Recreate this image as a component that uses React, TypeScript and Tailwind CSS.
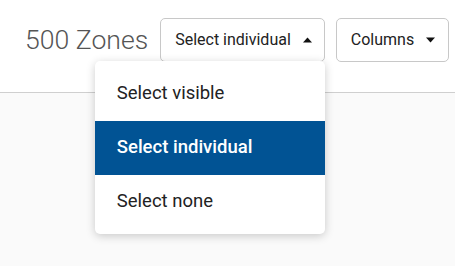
import React from "react";

const Caret = ({ up }: { up?: boolean }) => (
  <svg width="9" height="6" viewBox="0 0 9 6" className="ml-[12px] shrink-0">
    {up ? <path d="M0 5.5 L4.5 0.5 L9 5.5 Z" fill="#111" /> : <path d="M0 0.5 L4.5 5.5 L9 0.5 Z" fill="#111" />}
  </svg>
);

export default function App() {
  const items = ["Select visible", "Select individual", "Select none"];
  const selected = 1;

  return (
    <div className="w-[455px] h-[266px] flex flex-col bg-[#fafafa] font-['Roboto',sans-serif] overflow-hidden">
      {/* Header */}
      <div className="h-[93px] shrink-0 bg-white border-b border-[#cfcfcf] flex items-start pl-[25px] pt-[18px] whitespace-nowrap">
        <span className="shrink-0 text-[26.6px] font-light text-[#555] leading-[44px] mr-[12px]">500 Zones</span>

        <div className="relative shrink-0">
          <button className="h-[44px] pl-[14px] pr-[12px] flex items-center border border-[#c8c8c8] rounded-[5px] bg-white text-[16px] text-[#222]">
            Select individual
            <Caret up />
          </button>

          {/* Dropdown menu */}
          <div className="absolute right-0 top-[43px] w-[230px] bg-white rounded-[5px] shadow-[0_2px_10px_rgba(0,0,0,0.2)] pt-[6px] pb-[5px] z-10">
            {items.map((label, i) => (
              <div
                key={label}
                className={`h-[54px] flex items-center pl-[22px] text-[18.5px] ${
                  i === selected ? "bg-[#015394] text-white font-medium" : "text-[#222]"
                }`}
              >
                {label}
              </div>
            ))}
          </div>
        </div>

        <button className="shrink-0 ml-[11px] h-[44px] pl-[14px] pr-[13px] flex items-center border border-[#c8c8c8] rounded-[5px] bg-white text-[16px] text-[#222]">
          Columns
          <Caret />
        </button>
      </div>
    </div>
  );
}
